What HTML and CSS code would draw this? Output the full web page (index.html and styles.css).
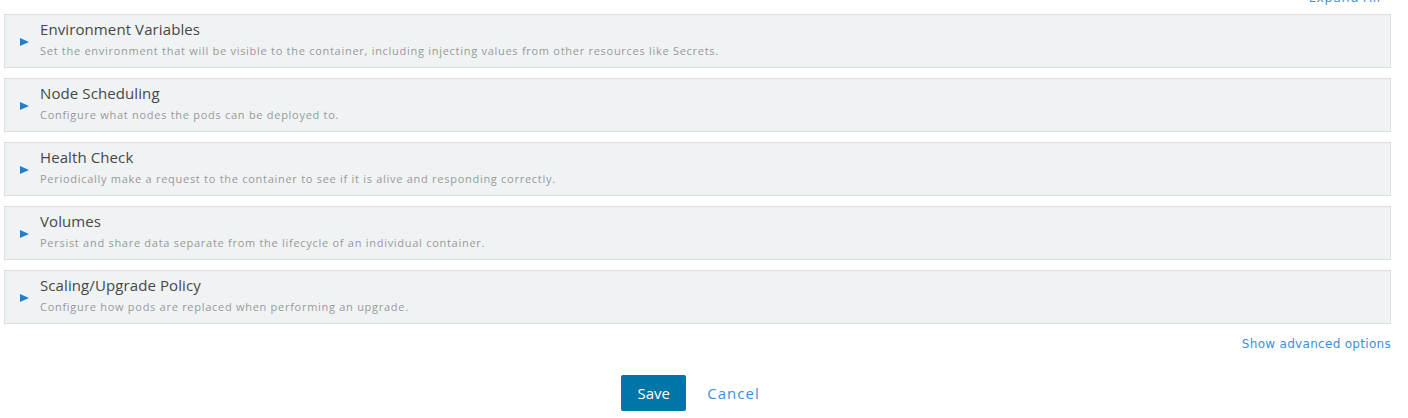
FILE: index.html
```html
<!DOCTYPE html>
<html>
<head>
<meta charset="utf-8">
<link rel="stylesheet" href="styles.css">
</head>
<body>
<div class="page">
  <div class="top-row"><a class="link expand">Expand All</a></div>
  <div class="panels">
    <div class="panel">
      <span class="arrow"></span>
      <div class="text">
        <div class="title">Environment Variables</div>
        <div class="desc">Set the environment that will be visible to the container, including injecting values from other resources like Secrets.</div>
      </div>
    </div>
    <div class="panel">
      <span class="arrow"></span>
      <div class="text">
        <div class="title">Node Scheduling</div>
        <div class="desc">Configure what nodes the pods can be deployed to.</div>
      </div>
    </div>
    <div class="panel">
      <span class="arrow"></span>
      <div class="text">
        <div class="title">Health Check</div>
        <div class="desc">Periodically make a request to the container to see if it is alive and responding correctly.</div>
      </div>
    </div>
    <div class="panel">
      <span class="arrow"></span>
      <div class="text">
        <div class="title">Volumes</div>
        <div class="desc">Persist and share data separate from the lifecycle of an individual container.</div>
      </div>
    </div>
    <div class="panel">
      <span class="arrow"></span>
      <div class="text">
        <div class="title">Scaling/Upgrade Policy</div>
        <div class="desc">Configure how pods are replaced when performing an upgrade.</div>
      </div>
    </div>
  </div>
  <div class="adv-row"><a class="link adv">Show advanced options</a></div>
  <div class="actions">
    <button class="btn-save">Save</button>
    <a class="link cancel">Cancel</a>
  </div>
</div>
</body>
</html>
```
FILE: styles.css
```css
html, body {
  margin: 0;
  padding: 0;
  background: #fff;
}
body {
  font-family: "Open Sans", "Liberation Sans", sans-serif;
  overflow: hidden;
}
.page {
  width: 1387px;
  margin-left: 4px;
}
.link {
  color: #3d8fd8;
  cursor: pointer;
}
.top-row {
  display: flex;
  justify-content: flex-end;
  height: 14px;
  padding-right: 10px;
}
.expand {
  font-size: 13px;
  line-height: 18px;
  margin-top: -12px;
  letter-spacing: 0.9px;
}
.panels {
  display: flex;
  flex-direction: column;
  gap: 10px;
}
.panel {
  display: flex;
  align-items: center;
  height: 54px;
  box-sizing: border-box;
  background: #f0f3f4;
  border: 1px solid #dcdfe2;
}
.arrow {
  width: 0;
  height: 0;
  margin-left: 15px;
  margin-right: 11px;
  margin-top: 1px;
  border-top: 4.5px solid transparent;
  border-bottom: 4.5px solid transparent;
  border-left: 9px solid #1f7fd0;
}
.text {
  display: flex;
  flex-direction: column;
}
.title {
  font-size: 15px;
  line-height: 20px;
  color: #474747;
  letter-spacing: 0.1px;
  margin-top: -4px;
}
.desc {
  font-size: 11px;
  line-height: 16px;
  color: #999;
  margin-top: 4px;
  letter-spacing: 0.72px;
}
.adv-row {
  display: flex;
  justify-content: flex-end;
  padding-top: 12px;
}
.adv {
  font-family: "DejaVu Sans", sans-serif;
  font-size: 12px;
  line-height: 16px;
  letter-spacing: 0.3px;
}
.actions {
  display: flex;
  justify-content: center;
  align-items: center;
  gap: 21px;
  margin-top: 23px;
  padding-right: 14px;
}
.btn-save {
  background: #0075a8;
  color: #fff;
  border: none;
  border-radius: 2px;
  width: 65px;
  height: 36px;
  font-family: "Open Sans", sans-serif;
  font-size: 15px;
  padding: 0;
}
.cancel {
  font-size: 15px;
  letter-spacing: 1px;
}
```
